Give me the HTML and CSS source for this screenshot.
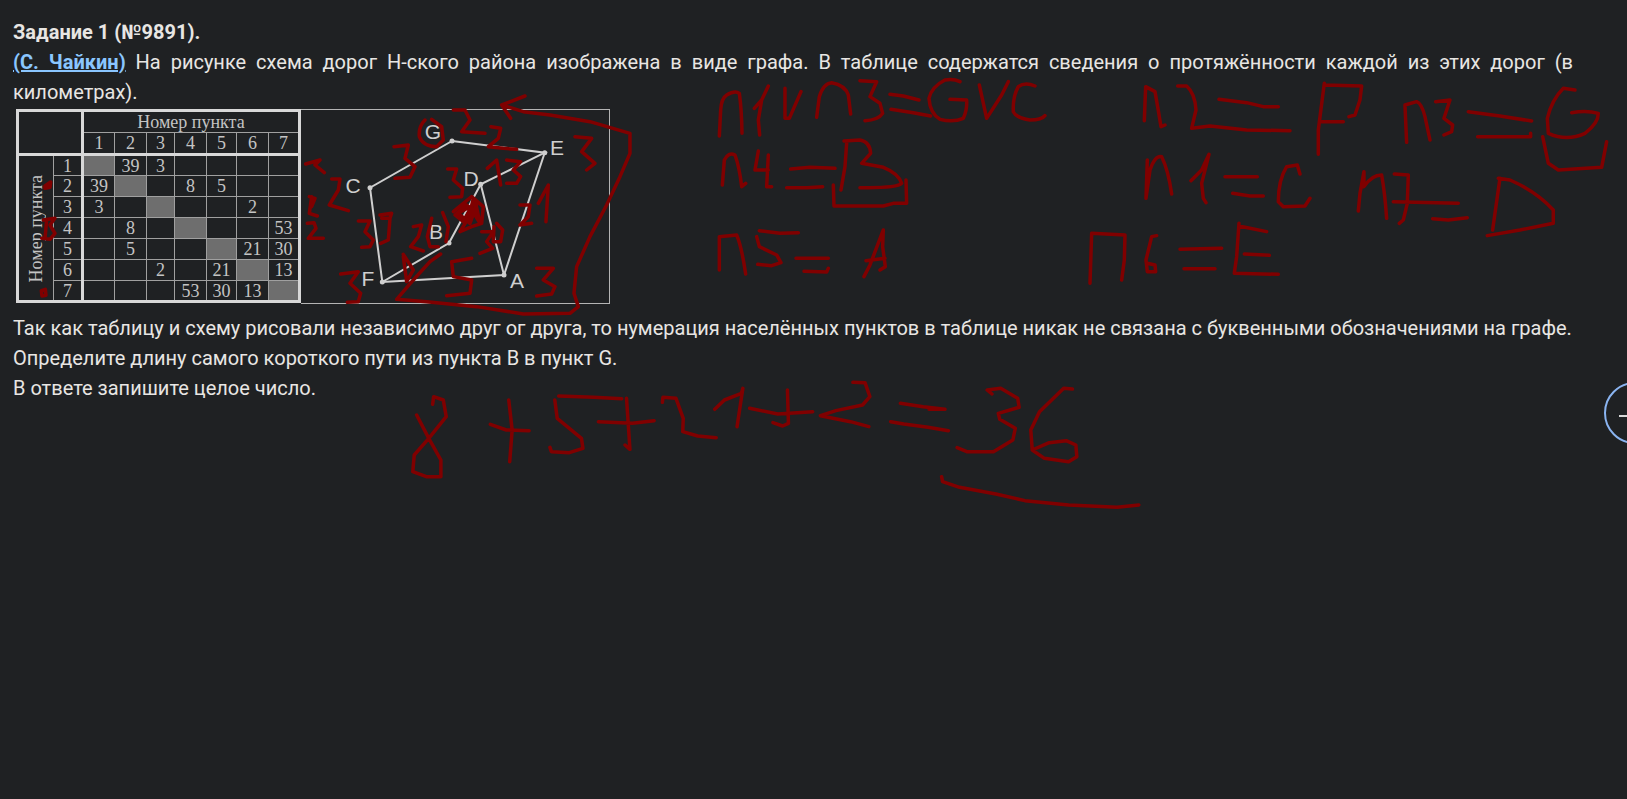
FILE: index.html
```html
<!DOCTYPE html>
<html lang="ru">
<head>
<meta charset="utf-8">
<title>Задание 1</title>
<link rel="stylesheet" href="styles.css">
</head>
<body>
<main class="task">
  <p class="line title">Задание 1 (№9891).</p>
  <p class="line just"><a class="author" href="#">(С. Чайкин)</a> На рисунке схема дорог Н-ского района изображена в виде графа. В таблице содержатся сведения о протяжённости каждой из этих дорог (в километрах).</p>
  <div class="figure">
    <table class="dist">
      <colgroup><col class="c-a"><col class="c-b"><col class="c-w"><col class="c-w"><col class="c-n"><col class="c-w"><col class="c-m"><col class="c-w"><col class="c-l"></colgroup>
      <tr class="r-h"><td class="corner" rowspan="2" colspan="2"></td><td class="head" colspan="7">Номер пункта</td></tr>
      <tr class="r-h sep"><td class="lft">1</td><td>2</td><td>3</td><td>4</td><td>5</td><td>6</td><td>7</td></tr>
      <tr class="r-d"><td class="side" rowspan="7"><span class="vert">Номер пункта</span></td><td>1</td><td class="lft fill"></td><td>39</td><td>3</td><td></td><td></td><td></td><td></td></tr>
      <tr class="r-d"><td>2</td><td class="lft">39</td><td class="fill"></td><td></td><td>8</td><td>5</td><td></td><td></td></tr>
      <tr class="r-d"><td>3</td><td class="lft">3</td><td></td><td class="fill"></td><td></td><td></td><td>2</td><td></td></tr>
      <tr class="r-d"><td>4</td><td class="lft"></td><td>8</td><td></td><td class="fill"></td><td></td><td></td><td>53</td></tr>
      <tr class="r-d"><td>5</td><td class="lft"></td><td>5</td><td></td><td></td><td class="fill"></td><td>21</td><td>30</td></tr>
      <tr class="r-d"><td>6</td><td class="lft"></td><td></td><td>2</td><td></td><td>21</td><td class="fill"></td><td>13</td></tr>
      <tr class="r-d"><td>7</td><td class="lft"></td><td></td><td></td><td>53</td><td>30</td><td>13</td><td class="fill"></td></tr>
    </table>
    <svg class="graph" width="308" height="193" viewBox="301 110 308 193">
      <g class="edges">
        <path d="M452 141L544.7 152.7L480.7 184.3L449 243L382.3 282L370 187.7L452 141"/>
        <path d="M544.7 152.7L504 275L382.3 282M480.7 184.3L504 275"/>
      </g>
      <g class="nodes">
        <circle cx="452" cy="141" r="2.5"/><circle cx="544.7" cy="152.7" r="2.5"/><circle cx="370" cy="187.7" r="2.5"/><circle cx="480.7" cy="184.3" r="2.5"/><circle cx="449" cy="243" r="2.5"/><circle cx="382.3" cy="282" r="2.5"/><circle cx="504" cy="275" r="2.5"/>
      </g>
      <g class="labels">
        <text x="433" y="139">G</text><text x="557" y="155">E</text><text x="353" y="193">C</text><text x="471" y="186">D</text><text x="436" y="239">B</text><text x="368" y="286">F</text><text x="517" y="288">A</text>
      </g>
    </svg>
  </div>
  <p class="line">Так как таблицу и схему рисовали независимо друг ог друга, то нумерация населённых пунктов в таблице никак не связана с буквенными обозначениями на графе.</p>
  <p class="line">Определите длину самого короткого пути из пункта B в пункт G.</p>
  <p class="line">В ответе запишите целое число.</p>
</main>
<svg class="ink" width="1627" height="799" viewBox="0 0 1627 799">
  <g transform="translate(700 70) scale(.3333)">
    <path d="M58 198L62 120Q64 85 80 75Q105 60 118 70Q125 120 126 190M163 115L185 90L205 48M185 90L175 150L179 195M255 55L255 145L268 145L303 65M350 142L358 80Q370 40 395 38Q435 45 445 75L452 132M480 32L530 35L510 80L540 100L548 130Q535 150 495 152M570 73L610 78L657 90M573 118L640 128L692 138M780 35Q760 25 735 30Q695 50 687 85Q690 130 720 148Q760 158 790 145Q802 120 800 90L750 88M838 45L860 145L905 75L925 35M1005 48Q975 35 955 50Q938 80 940 125Q950 145 990 150Q1025 150 1035 137"/>
    <path d="M67 345L73 270Q85 245 105 255Q118 290 125 350L137 340M175 243L165 300L205 300M205 255L200 350L215 350M272 297L330 292L405 295M260 353L320 353L368 350M432 213L480 210Q510 215 512 250L485 280L550 292Q595 310 605 340Q590 355 480 353M440 220L435 290L423 360M400 345L402 408L550 408L580 400L620 400L618 330"/>
    <path d="M58 600L58 500L110 495Q125 530 137 612M178 482L240 490L295 488M170 500L178 530L230 555L243 578L215 587L173 583M288 565L385 565M312 604L380 606L385 595M492 620L510 585L550 480L548 530L556 590L540 600M498 572L555 565"/>
  </g>
  <g transform="translate(1060 70) scale(.3333)">
    <path d="M253 152L257 50L285 65Q295 120 303 170L315 165M353 48L380 48Q405 70 408 120L395 175L450 168L560 180L690 182M477 88L560 98L610 110L655 110M793 40L775 180L775 253M793 45L905 48L900 90L885 135L867 140M780 155L850 155M1040 217L1035 105L1070 95Q1085 100 1095 140L1110 210M1127 95L1170 90L1152 145L1178 165L1175 185L1152 195M1225 125L1320 138L1415 153M1253 200L1412 200L1412 190"/>
    <path d="M262 270L258 385L270 300Q285 255 305 260Q325 300 335 372M393 332L425 300L447 253L425 340L430 385L438 398M495 320L592 320M518 370L570 378L610 378M720 312L712 285L680 290Q655 330 655 395L670 410L735 408L750 385M895 423L900 370L912 305L912 350Q935 315 965 315Q975 370 980 445M1003 312L1045 315L1042 400L1030 450L1018 460M1000 395L1195 400M1118 446L1165 450L1222 443M1320 325L1298 480M1315 325L1350 330Q1430 365 1480 420L1480 460L1380 480L1282 497"/>
    <path d="M90 640L95 490L195 495L193 570L185 630M290 497L275 500L258 570L262 605L287 605L285 585L262 580M360 538L485 535M372 596L465 596M537 460L530 560L523 610L655 613M537 468L620 485M553 552L628 556"/>
  </g>
  <g transform="translate(1530 90) scale(.3333)">
    <path d="M135 0L100 -5Q65 30 52 85L55 130Q110 155 165 130Q205 100 205 70Q170 60 125 68M38 140L55 220L85 240L215 232L230 155"/>
  </g>
  <g transform="translate(390 370) scale(.4847 .3333)">
    <path d="M88 103L90 80L110 90L116 140L80 205L55 135M80 205L50 255L47 305L75 320L105 320L105 270L80 205M245 90L252 180L247 275M207 163L240 180L287 182M348 78L420 82L478 86M340 90L345 145L395 205L398 235L370 248L333 245L330 232M488 85L495 238L485 225M430 155L500 160L545 152M562 97L563 82L590 85L605 145L604 185L635 198L673 203M670 118L690 90L725 70L728 55L716 170M742 115L800 132L872 125M820 60L822 160L810 168L790 158M955 37L980 38L990 80L975 105L920 122L888 137L950 155L988 170M1053 100L1100 110L1145 118L1112 118M1033 155L1060 162L1110 172L1152 182M1242 72L1232 60L1260 55L1295 85L1298 112L1255 130L1258 148L1290 175L1285 210L1245 245L1190 245L1170 233M1408 57L1390 55L1340 125L1322 180L1325 240L1350 265L1400 275L1417 260L1415 225L1395 212L1360 218L1325 240M1138 320L1140 335L1175 352L1250 372L1310 392L1400 405L1500 412L1545 405"/>
  </g>
  <g transform="translate(290 90) scale(.3333)">
    <path d="M405 90Q385 110 388 140Q400 170 440 170L460 150L455 110L425 88M490 60L525 60L540 90L515 125L585 130M603 110L632 115L625 145L595 170L640 175L680 178M705 18L635 45L662 85M635 45L700 65L780 75L900 95L1020 130L1020 190L990 260L950 345L900 440L860 530L852 610L865 650L840 670L700 672L560 650L410 635L320 628L370 570L420 515L452 492M855 140L905 145L875 185L915 220L890 240M47 222L90 210L75 225L103 248M125 267L150 267L145 300L118 345L175 362M65 320L58 370L82 378M58 320L75 325L65 350M52 400L72 398L78 415L55 445L100 445M312 170L355 165L345 205L375 230L360 262L315 265M205 393L240 393L225 425L250 450L240 470L215 472M270 375L305 370L300 385L275 385M300 385L295 450L272 460M370 410L395 405L385 440L362 470L400 483M425 385L412 440L420 470L445 470M458 368L475 410L468 455M340 493L370 540L350 575L340 500M545 505L485 515L490 560L545 570L540 610L470 617M740 535L790 535L760 570L795 590L785 612L740 618M152 552L205 545L180 580L212 610L205 635L172 637M473 237L500 237L490 270L518 295L515 320L480 322M592 235L620 210L632 285M650 210L692 215L670 240L692 260L680 280L650 280M690 345L720 345L715 380L690 405L725 400M745 340L775 285L768 395M575 425L610 425L590 455L608 475L570 490M620 400L638 420L632 455L610 455L612 410"/>
    <path d="M490 365L520 340L545 320L580 350L575 400L545 410L510 425L560 345L540 400L505 370L540 350L570 400L555 330L520 395L495 375L530 345L565 385L550 325L535 390"/>
  </g>
  <g transform="translate(0 100) scale(.3333)">
    <path d="M135 258L152 246L150 262L135 265Z"/>
    <path d="M124 572L136 568L138 586L126 588Z"/>
    <path d="M130 360L165 355L150 375L165 400L150 418L125 415M140 360L135 415"/>
  </g>
</svg>
<button class="zoom-btn" type="button" aria-label="Увеличить"><span class="zoom-bar"></span></button>
</body>
</html>
```
FILE: styles.css
```css
html, body { margin: 0; height: 100%; }
body {
  background: #1f2123;
  color: #e8e6e3;
  font-family: Roboto, "Noto Sans", sans-serif;
  font-size: 20px;
  line-height: 30px;
  overflow: hidden;
  position: relative;
}
.task { padding: 17px 54px 0 13px; }
.line { margin: 0; }
.title { font-weight: 700; }
.just { text-align: justify; }
.author { color: #8ac6ff; font-weight: 700; }
.figure { display: flex; align-items: flex-start; margin: 2px 0 10px 3px; height: 194px; }
.dist {
  border-collapse: collapse;
  table-layout: fixed;
  width: 284px;
  height: 193px;
  border: 3px solid #d8d8d8;
  font-family: "Liberation Serif", serif;
  font-size: 18px;
  line-height: 1;
  color: #c4c4c4;
}
.dist td { border: 1px solid #a0a0a0; padding: 0; text-align: center; }
.c-a { width: 36px; }
.c-b { width: 29px; }
.c-w { width: 32px; }
.c-l { width: 31px; }
.c-n { width: 28px; }
.c-m { width: 30px; }
.r-h { height: 22px; }
.r-d { height: 21px; }
.dist .head { border-top: 0; }
.dist .corner { border-right: 3px solid #d8d8d8; border-bottom: 3px solid #d8d8d8; }
.dist .sep td { border-bottom: 3px solid #d8d8d8; }
.dist .lft { border-left: 3px solid #d8d8d8; }
.dist .fill { background: #6e6e6e; }
.dist .side { padding-top: 4px; }
.vert { display: inline-block; writing-mode: vertical-rl; transform: rotate(180deg); }
.graph { border: 1px solid #b4b4b4; border-left: 0; flex: none; }
.edges path { fill: none; stroke: #cfcfcf; stroke-width: 2; }
.nodes circle { fill: #cfcfcf; }
.labels text { fill: #cfcfcf; font-family: "Liberation Sans", sans-serif; font-size: 21px; text-anchor: middle; }
.ink { position: absolute; left: 0; top: 0; pointer-events: none; }
.ink path {
  fill: none;
  stroke: #800000;
  stroke-width: 3.5;
  stroke-linecap: round;
  stroke-linejoin: round;
  vector-effect: non-scaling-stroke;
}
.zoom-btn {
  position: absolute;
  left: 1604px;
  top: 382px;
  width: 62px;
  height: 62px;
  padding: 0;
  border: 2px solid #8ab4f0;
  border-radius: 50%;
  background: transparent;
}
.zoom-bar { position: absolute; left: 13px; top: 31px; width: 24px; height: 2px; background: #d8d8d8; }
```
